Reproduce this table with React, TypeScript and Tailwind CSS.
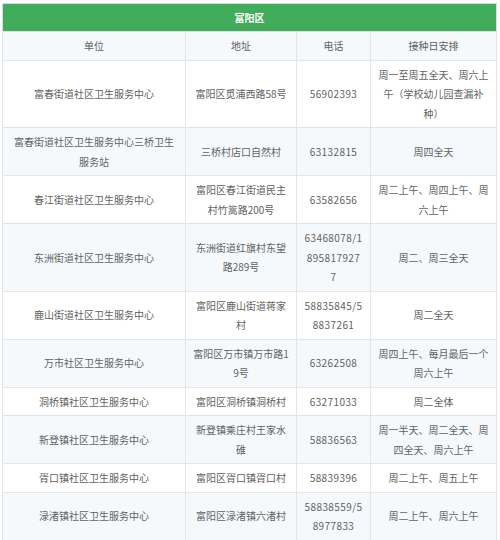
import React from 'react';

type Row = {
  unit: string[];
  addr: string[];
  phone: string[];
  plan: string[];
};

const rows: Row[] = [
  { unit: ['富春街道社区卫生服务中心'], addr: ['富阳区觅浦西路58号'], phone: ['56902393'], plan: ['周一至周五全天、周六上', '午（学校幼儿园查漏补', '种）'] },
  { unit: ['富春街道社区卫生服务中心三桥卫生', '服务站'], addr: ['三桥村店口自然村'], phone: ['63132815'], plan: ['周四全天'] },
  { unit: ['春江街道社区卫生服务中心'], addr: ['富阳区春江街道民主', '村竹篙路200号'], phone: ['63582656'], plan: ['周二上午、周四上午、周', '六上午'] },
  { unit: ['东洲街道社区卫生服务中心'], addr: ['东洲街道红旗村东望', '路289号'], phone: ['63468078/1', '895817927', '7'], plan: ['周二、周三全天'] },
  { unit: ['鹿山街道社区卫生服务中心'], addr: ['富阳区鹿山街道蒋家', '村'], phone: ['58835845/5', '8837261'], plan: ['周二全天'] },
  { unit: ['万市社区卫生服务中心'], addr: ['富阳区万市镇万市路1', '9号'], phone: ['63262508'], plan: ['周四上午、每月最后一个', '周六上午'] },
  { unit: ['洞桥镇社区卫生服务中心'], addr: ['富阳区洞桥镇洞桥村'], phone: ['63271033'], plan: ['周二全体'] },
  { unit: ['新登镇社区卫生服务中心'], addr: ['新登镇乘庄村王家水', '碓'], phone: ['58836563'], plan: ['周一半天、周二全天、周', '四全天、周六上午'] },
  { unit: ['胥口镇社区卫生服务中心'], addr: ['富阳区胥口镇胥口村'], phone: ['58839396'], plan: ['周二上午、周五上午'] },
  { unit: ['渌渚镇社区卫生服务中心'], addr: ['富阳区渌渚镇六渚村'], phone: ['58838559/5', '8977833'], plan: ['周二上午、周六上午'] },
];

function Lines({ lines }: { lines: string[] }) {
  return (
    <>
      {lines.map((l, i) => (
        <div key={i} className="whitespace-nowrap">{l}</div>
      ))}
    </>
  );
}

const cell = 'border border-[#e2e5ea] px-1 py-1 text-center align-middle';

export default function App() {
  return (
    <div
      className="h-[540px] w-[500px] overflow-hidden bg-white pl-[2px] pt-[3px] text-[10px] leading-[19.5px] text-[#626262]"
      style={{ fontFamily: '"Noto Sans CJK SC", "Noto Sans", sans-serif' }}
    >
      <table className="w-[494px] table-fixed border-collapse">
        <colgroup>
          <col className="w-[183px]" />
          <col className="w-[111px]" />
          <col className="w-[74px]" />
          <col className="w-[126px]" />
        </colgroup>
        <thead>
          <tr>
            <th colSpan={4} className="h-[28px] border border-[#d9dde2] bg-[#41ad5b] text-center font-bold text-white">
              富阳区
            </th>
          </tr>
          <tr className="bg-[#f6f9fc]">
            <th className={`${cell} font-normal`}>单位</th>
            <th className={`${cell} font-normal`}>地址</th>
            <th className={`${cell} font-normal`}>电话</th>
            <th className={`${cell} font-normal`}>接种日安排</th>
          </tr>
        </thead>
        <tbody>
          {rows.map((r, i) => (
            <tr key={i} className={i % 2 === 1 ? 'bg-[#f6f9fc]' : 'bg-white'}>
              <td className={cell}><Lines lines={r.unit} /></td>
              <td className={cell}><Lines lines={r.addr} /></td>
              <td className={`${cell} tracking-[0.4px]`}><Lines lines={r.phone} /></td>
              <td className={cell}><Lines lines={r.plan} /></td>
            </tr>
          ))}
          {/* next row starts right at the bottom edge */}
          <tr className="h-[28px] bg-white">
            <td className={cell} />
            <td className={cell} />
            <td className={cell} />
            <td className={cell} />
          </tr>
        </tbody>
      </table>
    </div>
  );
}
